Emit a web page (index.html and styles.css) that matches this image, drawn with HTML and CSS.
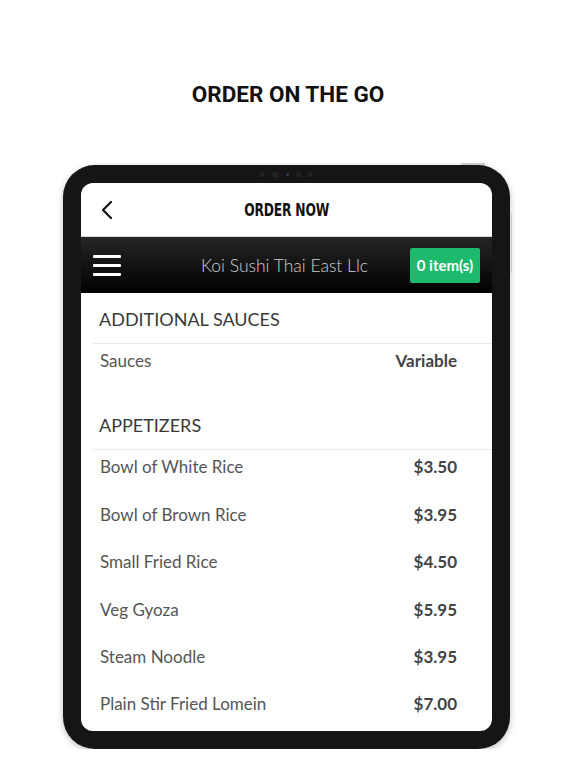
FILE: index.html
```html
<!DOCTYPE html>
<html lang="en">
<head>
    <meta charset="UTF-8">
    <meta name="viewport" content="width=device-width, initial-scale=1.0">
    <title>Order On The Go</title>
    <link rel="stylesheet" href="styles.css">
</head>
<body>
    <h1 class="headline">ORDER ON THE GO</h1>
    <div class="device">
        <div class="camera">
            <span class="dot"></span><span class="dot big"></span><span class="dot lens"></span><span class="dot"></span><span class="dot"></span>
        </div>
        <span class="side-btn top"></span>
        <span class="side-btn right"></span>
        <div class="screen">
            <div class="nav">
                <svg class="back" width="14" height="20" viewBox="0 0 14 20">
                    <path d="M11 2 L3 10 L11 18" fill="none" stroke="#111" stroke-width="2.2" stroke-linecap="round" stroke-linejoin="round"/>
                </svg>
                <div class="nav-title">ORDER NOW</div>
            </div>
            <div class="bar">
                <div class="burger"><span></span><span></span><span></span></div>
                <div class="store">Koi Sushi Thai East Llc</div>
                <div class="cart">0 item(s)</div>
            </div>
            <div class="menu">
                <div class="section">
                    <div class="section-title">ADDITIONAL SAUCES</div>
                    <div class="item"><span>Sauces</span><span class="price">Variable</span></div>
                </div>
                <div class="section">
                    <div class="section-title">APPETIZERS</div>
                    <div class="item"><span>Bowl of White Rice</span><span class="price">$3.50</span></div>
                    <div class="item"><span>Bowl of Brown Rice</span><span class="price">$3.95</span></div>
                    <div class="item"><span>Small Fried Rice</span><span class="price">$4.50</span></div>
                    <div class="item"><span>Veg Gyoza</span><span class="price">$5.95</span></div>
                    <div class="item"><span>Steam Noodle</span><span class="price">$3.95</span></div>
                    <div class="item"><span>Plain Stir Fried Lomein</span><span class="price">$7.00</span></div>
                </div>
            </div>
        </div>
    </div>
</body>
</html>
```

FILE: styles.css
```css
body {
    margin: 0;
    background-color: #fff;
    font-family: Lato, 'Open Sans', sans-serif;
}
.headline {
    margin: 0;
    padding-top: 80px;
    font-family: Roboto, sans-serif;
    font-weight: 700;
    font-size: 22.5px;
    line-height: 28px;
    text-align: center;
    color: #111;
}
.device {
    position: relative;
    width: 411px;
    height: 548px;
    margin: 57px 0 0 63px;
    padding: 18px;
    background-color: #151515;
    border-radius: 32px;
    box-shadow: 0 2px 6px rgba(0,0,0,0.25);
}
.camera {
    position: absolute;
    top: 5px;
    left: 0;
    right: 0;
    display: flex;
    justify-content: center;
    gap: 7px;
    align-items: center;
    height: 8px;
}
.dot {
    width: 5px;
    height: 5px;
    border-radius: 50%;
    background-color: #222;
}
.dot.big {
    width: 7px;
    height: 7px;
}
.dot.lens {
    width: 3px;
    height: 3px;
    background-color: #2a3a66;
}
.side-btn {
    position: absolute;
    background-color: #ccc;
}
.side-btn.top {
    top: -2px;
    right: 25px;
    width: 24px;
    height: 2px;
}
.side-btn.right {
    top: 48px;
    right: -2px;
    width: 1px;
    height: 60px;
}
.screen {
    height: 548px;
    background-color: #fff;
    border-radius: 12px;
    overflow: hidden;
}
.nav {
    position: relative;
    height: 53px;
    display: flex;
    align-items: center;
    justify-content: center;
    border-bottom: 1px solid #d8d8d8;
}
.back {
    position: absolute;
    left: 19px;
    top: 17px;
}
.nav-title {
    font-family: 'DejaVu Sans Condensed', 'DejaVu Sans', sans-serif;
    font-stretch: condensed;
    font-weight: 700;
    font-size: 18px;
    letter-spacing: -0.3px;
    color: #111;
    transform: scaleX(0.76);
}
.bar {
    height: 56px;
    padding: 0 12px;
    display: grid;
    grid-template-columns: 1fr auto 1fr;
    align-items: center;
    background: linear-gradient(#262626, #000);
}
.burger {
    display: flex;
    flex-direction: column;
    gap: 6px;
    width: 28px;
}
.burger span {
    height: 3px;
    background-color: #fff;
    border-radius: 1px;
}
.store {
    color: #cfcfcf;
    font-size: 17.5px;
    font-weight: 300;
    margin-right: 4px;
}
.cart {
    justify-self: end;
    width: 70px;
    height: 35px;
    line-height: 35px;
    text-align: center;
    background-color: #1db96c;
    color: #fff;
    font-weight: 700;
    font-size: 15px;
    border-radius: 2px;
}
.section {
    margin-bottom: 8px;
}
.section-title {
    margin-left: 12px;
    padding: 14px 18px 12px 6px;
    font-size: 18px;
    line-height: 24px;
    color: #3a3a3a;
    border-bottom: 1px solid #ebebeb;
}
.item {
    height: 42.4px;
    padding: 5px 35px 0 19px;
    display: flex;
    justify-content: space-between;
    font-size: 17px;
    line-height: 24px;
    color: #555;
}
.price {
    font-weight: 700;
    color: #444;
}
```
